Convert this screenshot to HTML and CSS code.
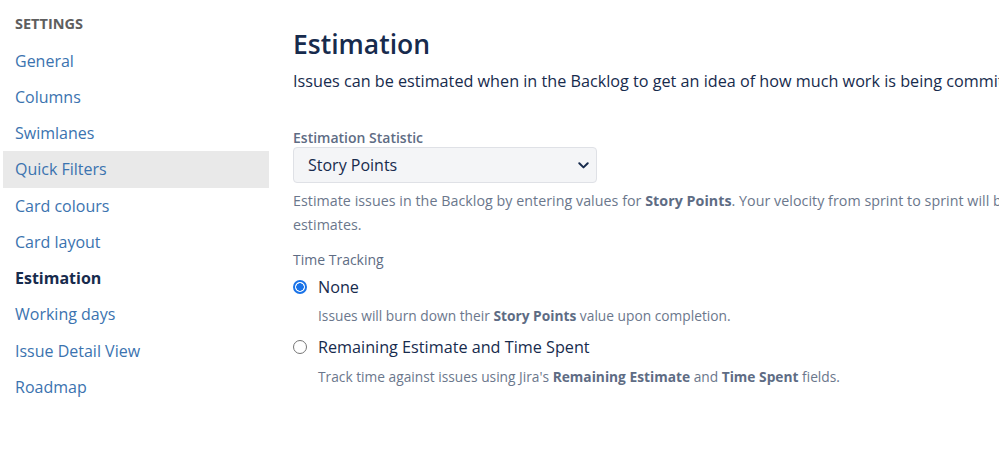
FILE: index.html
```html
<!DOCTYPE html>
<html>
<head>
<meta charset="utf-8">
<link rel="stylesheet" href="styles.css">
</head>
<body>
<div class="page">
  <nav class="sidebar">
    <div class="side-title">SETTINGS</div>
    <a class="side-item">General</a>
    <a class="side-item">Columns</a>
    <a class="side-item">Swimlanes</a>
    <a class="side-item hover">Quick Filters</a>
    <a class="side-item">Card colours</a>
    <a class="side-item">Card layout</a>
    <a class="side-item active">Estimation</a>
    <a class="side-item">Working days</a>
    <a class="side-item">Issue Detail View</a>
    <a class="side-item">Roadmap</a>
  </nav>
  <main class="main">
    <h1 class="title">Estimation</h1>
    <p class="intro">Issues can be estimated when in the Backlog to get an idea of how much work is being committed to each sprint.</p>
    <div class="field-label">Estimation Statistic</div>
    <div class="select">
      <span class="select-text">Story Points</span>
      <svg class="chevron" width="11" height="7" viewBox="0 0 11 7"><path d="M1.3 1.3 L5.5 5.4 L9.7 1.3" fill="none" stroke="#172b4d" stroke-width="2" stroke-linecap="round" stroke-linejoin="round"/></svg>
    </div>
    <p class="help">Estimate issues in the Backlog by entering values for <b>Story Points</b>. Your velocity from sprint to sprint will be measured against these<br>estimates.</p>
    <div class="field-label tt">Time Tracking</div>
    <div class="radio-row first">
      <span class="radio checked"></span>
      <span class="radio-label">None</span>
    </div>
    <p class="radio-help">Issues will burn down their <b>Story Points</b> value upon completion.</p>
    <div class="radio-row second">
      <span class="radio"></span>
      <span class="radio-label">Remaining Estimate and Time Spent</span>
    </div>
    <p class="radio-help">Track time against issues using Jira's <b>Remaining Estimate</b> and <b>Time Spent</b> fields.</p>
  </main>
</div>
</body>
</html>
```
FILE: styles.css
```css
html, body {
  margin: 0;
  padding: 0;
  background: #ffffff;
  width: 999px;
  height: 462px;
  overflow: hidden;
}
body {
  font-family: "Open Sans", "Noto Sans", sans-serif;
  color: #172b4d;
}
.page {
  display: flex;
  align-items: flex-start;
}
.sidebar {
  width: 266px;
  margin-left: 3px;
  padding-top: 14px;
  display: flex;
  flex-direction: column;
  flex-shrink: 0;
}
.side-title {
  padding-left: 12px;
  font-size: 14.5px;
  font-weight: 700;
  line-height: 20px;
  color: #5e5e5e;
  margin-bottom: 9px;
}
.side-item {
  display: block;
  height: 36.2px;
  line-height: 36px;
  padding-left: 12px;
  font-size: 16px;
  color: #3b73af;
  white-space: nowrap;
}
.side-item.hover {
  background: #e9e9e9;
  margin-top: -1px;
  height: 37.2px;
}
.side-item.active {
  font-weight: 700;
  color: #172b4d;
}
.main {
  padding-left: 24px;
  padding-top: 24px;
  white-space: nowrap;
  overflow: hidden;
  flex: 1;
}
.title {
  margin: 0;
  font-size: 26.5px;
  font-weight: 600;
  line-height: 40px;
  color: #172b4d;
}
.intro {
  margin: 5px 0 0 0;
  font-size: 16.2px;
  line-height: 24px;
  color: #172b4d;
}
.field-label {
  margin-top: 35px;
  font-size: 14px;
  font-weight: 600;
  line-height: 20px;
  color: #5e6c84;
}
.field-label.tt {
  margin-top: 13px;
  font-weight: 400;
}
.select {
  margin-top: -1px;
  height: 34px;
  border: 1px solid #dfe1e6;
  border-radius: 4px;
  background: #f4f5f7;
  display: flex;
  align-items: center;
  justify-content: space-between;
  padding: 0 7px 0 14px;
  box-sizing: content-box;
  width: 281px;
}
.select-text {
  font-size: 16px;
  color: #172b4d;
}
.chevron {
  display: block;
}
.help {
  margin: 6px 0 0 0;
  font-size: 14.25px;
  letter-spacing: 0.04px;
  line-height: 24px;
  color: #6b778c;
}
.help b, .radio-help b {
  color: #5e6c84;
  font-weight: 700;
}
.radio-row {
  display: flex;
  align-items: center;
  height: 24px;
  margin-top: 5px;
}
.radio-row.second {
  margin-top: 9px;
}
.radio {
  width: 12px;
  height: 12px;
  border-radius: 50%;
  border: 1px solid #767676;
  background: #fff;
  box-sizing: content-box;
  flex-shrink: 0;
}
.radio.checked {
  border: 2px solid #1a73e8;
  width: 10px;
  height: 10px;
  background: radial-gradient(circle, #1a73e8 0 3.5px, #fff 4px);
}
.radio-label {
  margin-left: 11px;
  font-size: 16.2px;
  color: #172b4d;
}
.radio-help {
  margin: 7px 0 0 25px;
  font-size: 13.75px;
  line-height: 20px;
  color: #6b778c;
}
.radio-row.second + .radio-help {
  margin-top: 8px;
}
```
